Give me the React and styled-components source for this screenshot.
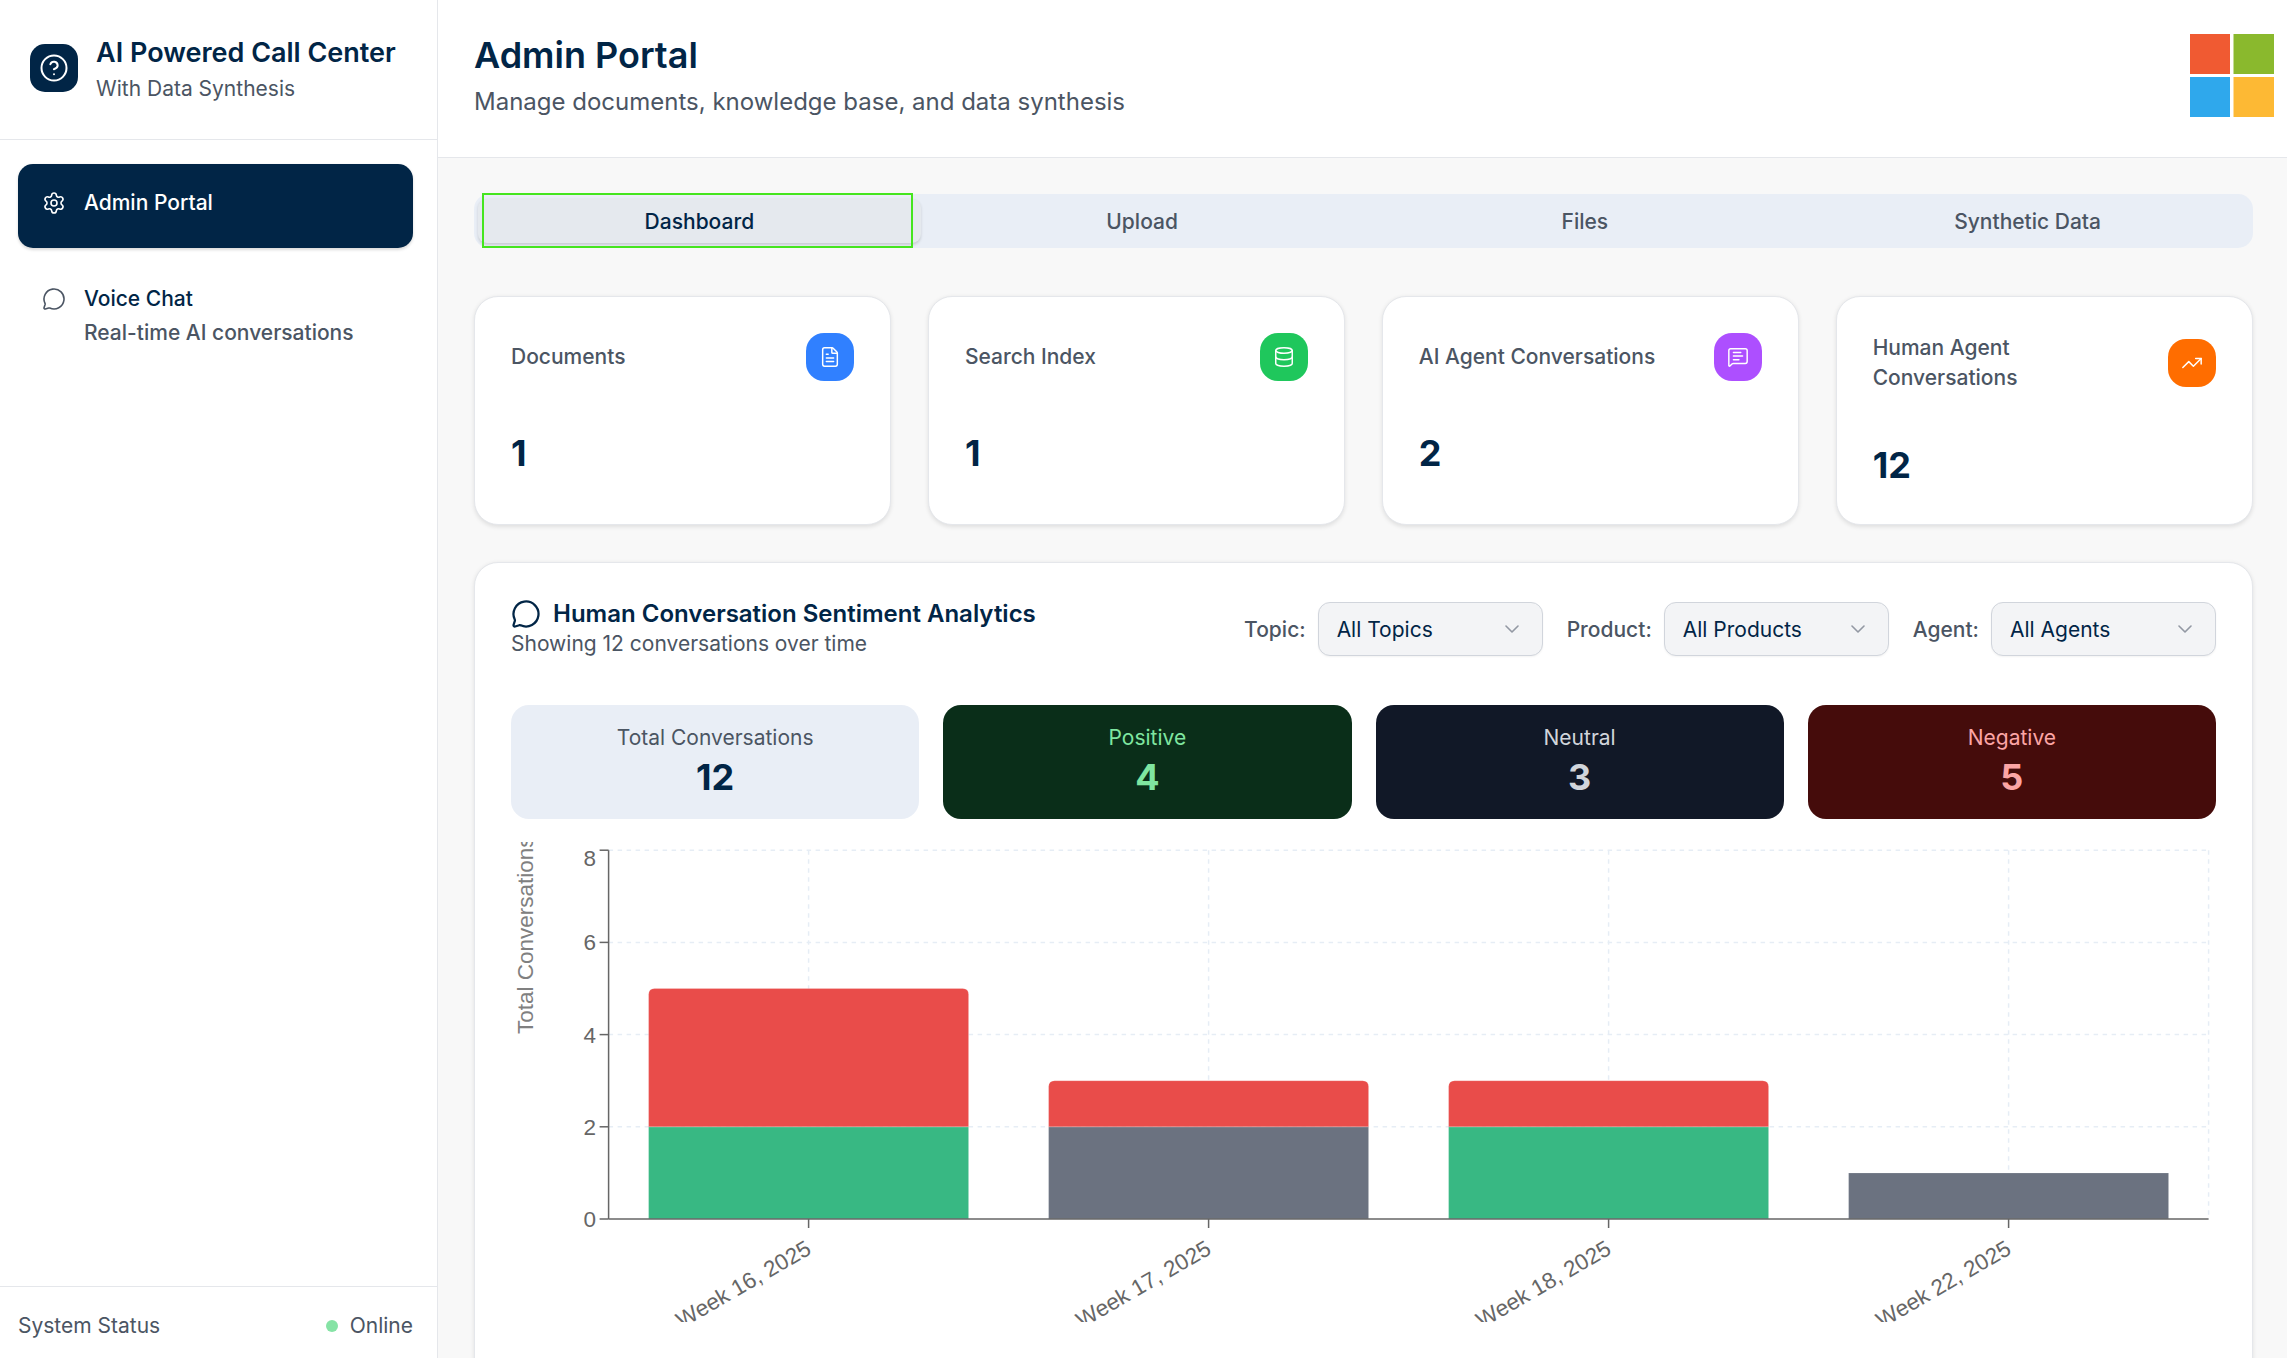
import React from 'react';
import styled, { createGlobalStyle } from 'styled-components';
import {
  ChevronDown,
  CircleHelp,
  Database,
  FileText,
  MessageCircle,
  MessageSquareText,
  Settings,
  TrendingUp,
} from 'lucide-react';

const NAVY = '#012546';
const GRAY = '#4b5563';
const LINE = '#e5e7eb';

const GlobalStyle = createGlobalStyle`
  html, body {
    margin: 0;
    padding: 0;
    height: 100%;
    overflow: hidden;
    background: #f8f8f8;
    font-family: Inter, "Noto Sans", sans-serif;
  }
  * {
    box-sizing: border-box;
  }
`;

const Shell = styled.div`
  display: flex;
  width: 2287px;
  height: 1358px;
  overflow: hidden;
`;

const Sidebar = styled.aside`
  display: flex;
  flex: 0 0 438px;
  flex-direction: column;
  background: #fff;
  border-right: 1.5px solid ${LINE};
`;

const Brand = styled.div`
  display: flex;
  flex: none;
  align-items: center;
  gap: 18px;
  height: 140px;
  padding: 0 24px 0 30px;
  border-bottom: 1.5px solid ${LINE};
`;

const BrandMark = styled.div`
  display: flex;
  flex: 0 0 48px;
  align-items: center;
  justify-content: center;
  height: 48px;
  margin-bottom: 4px;
  color: #fff;
  background: ${NAVY};
  border-radius: 15px;
`;

const BrandTitle = styled.div`
  margin-bottom: 3px;
  font-size: 27px;
  font-weight: 600;
  line-height: 36px;
  color: ${NAVY};
`;

const BrandSub = styled.div`
  font-size: 21px;
  line-height: 30px;
  color: ${GRAY};
`;

const Nav = styled.nav`
  display: flex;
  flex: 1;
  flex-direction: column;
  gap: 12px;
  padding: 24px 24px 0 18px;
`;

const NavItem = styled.div`
  display: flex;
  align-items: flex-start;
  gap: 18px;
  min-height: 84px;
  padding: 24px;
  color: ${(p) => (p.$active ? '#fff' : NAVY)};
  background: ${(p) => (p.$active ? NAVY : 'transparent')};
  border-radius: 15px;
  box-shadow: ${(p) => (p.$active ? '0 1.5px 3px rgba(0,0,0,.15)' : 'none')};

  svg {
    flex: none;
    margin-top: 3px;
    color: ${(p) => (p.$active ? '#fff' : GRAY)};
  }
`;

const NavLabel = styled.div`
  font-size: 21px;
  font-weight: 500;
  line-height: 30px;
`;

const NavSub = styled.div`
  margin-top: 4px;
  font-size: 21px;
  font-weight: 500;
  line-height: 30px;
  color: ${GRAY};
  white-space: nowrap;
`;

const SideFooter = styled.div`
  display: flex;
  flex: none;
  align-items: flex-start;
  justify-content: space-between;
  height: 72px;
  padding: 24px 24px 0 18px;
  font-size: 21px;
  line-height: 30px;
  color: ${GRAY};
  border-top: 1.5px solid ${LINE};
`;

const Status = styled.div`
  display: flex;
  align-items: center;
  gap: 12px;
`;

const StatusDot = styled.span`
  width: 12px;
  height: 12px;
  background: #86e3a5;
  border-radius: 50%;
`;

const Main = styled.main`
  display: flex;
  flex: 1;
  flex-direction: column;
  min-width: 0;
`;

const TopBar = styled.header`
  display: flex;
  flex: 0 0 158px;
  align-items: flex-start;
  justify-content: space-between;
  padding: 28px 13px 0 36px;
  background: #fff;
  border-bottom: 1.5px solid ${LINE};
`;

const PageTitle = styled.h1`
  margin: 0 0 2px;
  font-size: 36px;
  font-weight: 600;
  line-height: 54px;
  color: ${NAVY};
`;

const PageSub = styled.p`
  margin: 0;
  font-size: 24px;
  line-height: 36px;
  color: ${GRAY};
`;

const Logo = styled.svg`
  flex: none;
  margin-top: 6px;
`;

const Content = styled.div`
  display: flex;
  flex: none;
  flex-direction: column;
  padding: 36px 34px 0 36px;
  background: #f8f8f8;
`;

const TabList = styled.div`
  position: relative;
  display: grid;
  grid-template-columns: repeat(4, 1fr);
  align-items: center;
  height: 54px;
  padding: 0 4px;
  background: #e9eef6;
  border-radius: 15px;
`;

const Tab = styled.div`
  display: flex;
  align-items: center;
  justify-content: center;
  height: 44px;
  font-size: 21px;
  font-weight: 500;
  color: ${(p) => (p.$active ? NAVY : GRAY)};
  background: ${(p) => (p.$active ? '#e5e9ee' : 'transparent')};
  border-radius: 9px;
  box-shadow: ${(p) => (p.$active ? '0 1.5px 3px rgba(0,0,0,.14)' : 'none')};
`;

const FocusRing = styled.div`
  position: absolute;
  top: -1px;
  left: 8px;
  width: 431px;
  height: 55px;
  border: 2px solid #45e51f;
  pointer-events: none;
`;

const CardGrid = styled.div`
  display: grid;
  grid-template-columns: repeat(4, 1fr);
  gap: 36.5px;
  margin-top: 48px;
`;

const Card = styled.section`
  height: 229px;
  padding: 36px;
  background: #fff;
  border: 1.5px solid ${LINE};
  border-radius: 24px;
  box-shadow: 0 1.5px 4px rgba(0, 0, 0, 0.1);
`;

const CardHead = styled.div`
  display: flex;
  align-items: center;
  justify-content: space-between;
  gap: 24px;
  min-height: 48px;
  margin-bottom: 48px;
`;

const CardLabel = styled.div`
  font-size: 21px;
  font-weight: 500;
  line-height: 30px;
  color: ${GRAY};
`;

const CardIcon = styled.div`
  display: flex;
  flex: 0 0 48px;
  align-items: center;
  justify-content: center;
  height: 48px;
  color: #fff;
  background: ${(p) => p.$bg};
  border-radius: 18px;
`;

const CardValue = styled.div`
  font-size: 36px;
  font-weight: 700;
  line-height: 48px;
  color: ${NAVY};
`;

const Panel = styled.section`
  height: 900px;
  margin-top: 37px;
  padding: 36px;
  background: #fff;
  border: 1.5px solid ${LINE};
  border-radius: 24px;
  box-shadow: 0 1.5px 4px rgba(0, 0, 0, 0.1);
`;

const PanelHead = styled.div`
  display: flex;
  align-items: center;
  justify-content: space-between;
  height: 60px;
`;

const PanelTitle = styled.h2`
  display: flex;
  align-items: center;
  gap: 12px;
  margin: 0;
  font-size: 24px;
  font-weight: 600;
  line-height: 30px;
  color: ${NAVY};
`;

const PanelSub = styled.p`
  margin: 0;
  font-size: 21px;
  line-height: 30px;
  color: ${GRAY};
`;

const Filters = styled.div`
  display: flex;
  align-items: center;
  gap: 24px;
`;

const Filter = styled.label`
  display: flex;
  align-items: center;
  gap: 12px;
  font-size: 21px;
  font-weight: 500;
  color: ${GRAY};
`;

const Select = styled.div`
  display: flex;
  align-items: center;
  justify-content: space-between;
  width: 225px;
  height: 54px;
  padding: 0 18px;
  font-weight: 400;
  color: ${NAVY};
  background: #f3f4f6;
  border: 1.5px solid #d1d5dc;
  border-radius: 12px;
  box-shadow: 0 1px 2px rgba(0, 0, 0, 0.05);

  svg {
    color: #6b7280;
    opacity: 0.7;
  }
`;

const Tiles = styled.div`
  display: grid;
  grid-template-columns: repeat(4, 1fr);
  gap: 24px;
  margin-top: 46px;
`;

const Tile = styled.div`
  height: 114px;
  padding: 18px;
  color: ${(p) => p.$fg};
  text-align: center;
  background: ${(p) => p.$bg};
  border-radius: 18px;
`;

const TileLabel = styled.div`
  font-size: 21px;
  line-height: 30px;
  color: ${(p) => p.$color};
`;

const TileValue = styled.div`
  font-size: 36px;
  font-weight: 700;
  line-height: 48px;
`;

const ChartSvg = styled.svg`
  display: block;
  margin-top: 23px;
  font-family: "Liberation Sans", Arial, sans-serif;
  font-size: 22.5px;
  fill: #666;
`;

const cards = [
  { label: 'Documents', value: 1, color: '#3080ff', Icon: FileText },
  { label: 'Search Index', value: 1, color: '#1fc75c', Icon: Database },
  { label: 'AI Agent Conversations', value: 2, color: '#ad4fff', Icon: MessageSquareText },
  { label: 'Human Agent Conversations', value: 12, color: '#ff6d00', Icon: TrendingUp },
];

const tiles = [
  { label: 'Total Conversations', value: 12, bg: '#e9eef6', fg: NAVY, labelColor: GRAY },
  { label: 'Positive', value: 4, bg: '#0a2e19', fg: '#7fe6a0', labelColor: '#7fe6a0' },
  { label: 'Neutral', value: 3, bg: '#111827', fg: '#d1d5db', labelColor: '#d1d5db' },
  { label: 'Negative', value: 5, bg: '#450c0b', fg: '#fca5a5', labelColor: '#fca5a5' },
];

const filters = [
  { label: 'Topic:', value: 'All Topics' },
  { label: 'Product:', value: 'All Products' },
  { label: 'Agent:', value: 'All Agents' },
];

// stacked counts per week, bottom to top
const weeks = [
  { name: 'Week 16, 2025', positive: 2, neutral: 0, negative: 3 },
  { name: 'Week 17, 2025', positive: 0, neutral: 2, negative: 1 },
  { name: 'Week 18, 2025', positive: 2, neutral: 0, negative: 1 },
  { name: 'Week 22, 2025', positive: 0, neutral: 1, negative: 0 },
];

const X0 = 97.6;
const BAND = 400;
const BASE = 377;
const UNIT = 46.1;
const BAR_INSET = 40;

const topRounded = (x, y, w, h, r) =>
  `M${x} ${y + h}V${y + r}Q${x} ${y} ${x + r} ${y}H${x + w - r}Q${x + w} ${y} ${x + w} ${y + r}V${y + h}Z`;

const Chart = () => {
  const right = X0 + BAND * weeks.length;
  return (
    <ChartSvg width="1705" height="480">
      <g stroke="#e6edf5" strokeWidth="1.5" strokeDasharray="4.5 4.5" fill="none">
        {[2, 4, 6, 8].map((t) => (
          <line key={t} x1={X0} x2={right} y1={BASE - t * UNIT} y2={BASE - t * UNIT} />
        ))}
        {weeks.map((w, i) => (
          <line key={w.name} x1={X0 + BAND * (i + 0.5)} x2={X0 + BAND * (i + 0.5)} y1={BASE - 8 * UNIT} y2={BASE} />
        ))}
        <line x1={right} x2={right} y1={BASE - 8 * UNIT} y2={BASE} />
      </g>

      {weeks.map((w, i) => {
        const x = X0 + BAND * i + BAR_INSET;
        const width = BAND - BAR_INSET * 2;
        let level = 0;
        const parts = [
          ['#38b883', w.positive],
          ['#6b7280', w.neutral],
          ['#e94c4a', w.negative],
        ].filter(([, n]) => n > 0);
        return (
          <g key={w.name}>
            {parts.map(([color, n]) => {
              const y = BASE - (level + n) * UNIT;
              level += n;
              const rounded = color === '#e94c4a';
              return (
                <path
                  key={color}
                  d={topRounded(x, y, width, n * UNIT, rounded ? 6 : 0)}
                  fill={color}
                  stroke="#fff"
                  strokeOpacity="0.2"
                />
              );
            })}
          </g>
        );
      })}

      <g stroke="#666" strokeWidth="1.5">
        <line x1={X0} x2={X0} y1={BASE - 8 * UNIT} y2={BASE} />
        <line x1={X0} x2={right} y1={BASE} y2={BASE} />
        {[0, 2, 4, 6, 8].map((t) => (
          <line key={t} x1={X0 - 9} x2={X0} y1={BASE - t * UNIT} y2={BASE - t * UNIT} />
        ))}
        {weeks.map((w, i) => (
          <line key={w.name} x1={X0 + BAND * (i + 0.5)} x2={X0 + BAND * (i + 0.5)} y1={BASE} y2={BASE + 9} />
        ))}
      </g>

      {[0, 2, 4, 6, 8].map((t) => (
        <text key={t} x="85" y={BASE - t * UNIT + (t === 8 ? 16 : 8)} textAnchor="end">
          {t}
        </text>
      ))}

      {weeks.map((w, i) => {
        const cx = X0 + BAND * (i + 0.5) + 4;
        return (
          <text key={w.name} x={cx} y={BASE + 34} textAnchor="end" transform={`rotate(-30 ${cx} ${BASE + 34})`}>
            {w.name}
          </text>
        );
      })}

      <text x="22" y="192" fill="#808080" transform="rotate(-90 22 192)">
        Total Conversations
      </text>
    </ChartSvg>
  );
};

const App = () => (
  <Shell>
    <GlobalStyle />
    <Sidebar>
      <Brand>
        <BrandMark>
          <CircleHelp size={30} strokeWidth={1.6} />
        </BrandMark>
        <div>
          <BrandTitle>AI Powered Call Center</BrandTitle>
          <BrandSub>With Data Synthesis</BrandSub>
        </div>
      </Brand>
      <Nav>
        <NavItem $active>
          <Settings size={24} strokeWidth={1.6} />
          <NavLabel>Admin Portal</NavLabel>
        </NavItem>
        <NavItem>
          <MessageCircle size={24} strokeWidth={1.6} />
          <div>
            <NavLabel>Voice Chat</NavLabel>
            <NavSub>Real-time AI conversations</NavSub>
          </div>
        </NavItem>
      </Nav>
      <SideFooter>
        <span>System Status</span>
        <Status>
          <StatusDot />
          <span>Online</span>
        </Status>
      </SideFooter>
    </Sidebar>

    <Main>
      <TopBar>
        <div>
          <PageTitle>Admin Portal</PageTitle>
          <PageSub>Manage documents, knowledge base, and data synthesis</PageSub>
        </div>
        <Logo width="84" height="84" viewBox="0 0 84 84">
          <rect width="40" height="40" fill="#f05a32" />
          <rect x="43.5" width="40.5" height="40" fill="#8ab92d" />
          <rect y="43" width="40" height="40" fill="#2fa8ec" />
          <rect x="43.5" y="43" width="40.5" height="40" fill="#fdb934" />
        </Logo>
      </TopBar>

      <Content>
        <TabList>
          <Tab $active>Dashboard</Tab>
          <Tab>Upload</Tab>
          <Tab>Files</Tab>
          <Tab>Synthetic Data</Tab>
          <FocusRing />
        </TabList>

        <CardGrid>
          {cards.map(({ label, value, color, Icon }) => (
            <Card key={label}>
              <CardHead>
                <CardLabel>{label}</CardLabel>
                <CardIcon $bg={color}>
                  <Icon size={22} strokeWidth={1.6} />
                </CardIcon>
              </CardHead>
              <CardValue>{value}</CardValue>
            </Card>
          ))}
        </CardGrid>

        <Panel>
          <PanelHead>
            <div>
              <PanelTitle>
                <MessageCircle size={30} strokeWidth={1.8} />
                Human Conversation Sentiment Analytics
              </PanelTitle>
              <PanelSub>Showing 12 conversations over time</PanelSub>
            </div>
            <Filters>
              {filters.map((f) => (
                <Filter key={f.label}>
                  {f.label}
                  <Select>
                    {f.value}
                    <ChevronDown size={24} strokeWidth={1.6} />
                  </Select>
                </Filter>
              ))}
            </Filters>
          </PanelHead>

          <Tiles>
            {tiles.map((t) => (
              <Tile key={t.label} $bg={t.bg} $fg={t.fg}>
                <TileLabel $color={t.labelColor}>{t.label}</TileLabel>
                <TileValue>{t.value}</TileValue>
              </Tile>
            ))}
          </Tiles>

          <Chart />
        </Panel>
      </Content>
    </Main>
  </Shell>
);

export default App;
